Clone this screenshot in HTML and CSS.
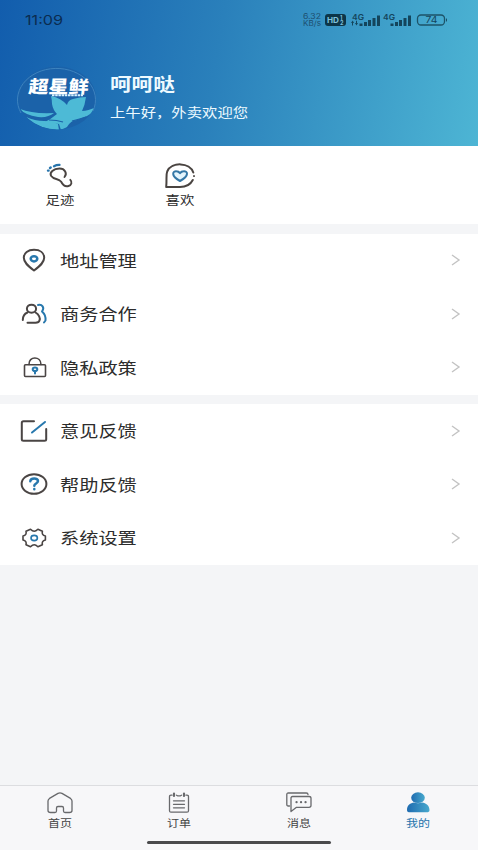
FILE: index.html
```html
<!DOCTYPE html>
<html lang="zh-CN">
<head>
<meta charset="utf-8">
<title>我的</title>
<link rel="stylesheet" href="styles.css">
</head>
<body>
<div class="app">
  <header class="hero">
    <div class="status">
      <span class="time"><span class="wide">11:09</span></span>
      <svg class="signals" width="146" height="16" viewBox="0 0 146 16">
        <g class="rate">
          <text x="0" y="7" textLength="18" lengthAdjust="spacingAndGlyphs">6.32</text>
          <text x="0" y="13.500" textLength="18" lengthAdjust="spacingAndGlyphs">KB/s</text>
        </g>
        <g transform="translate(22 0)">
          <rect x="0" y="2" width="21" height="12" rx="3" fill="#0c3549"/>
          <text class="hd" x="2" y="11.300" textLength="12" lengthAdjust="spacingAndGlyphs">HD</text>
          <text class="tiny" x="15" y="7.500">1</text>
          <text class="tiny" x="15" y="13">2</text>
          <g class="ink">
            <text class="net" x="27" y="7.500" textLength="12" lengthAdjust="spacingAndGlyphs">4G</text>
            <path d="M26 11l1.700-2.500 1.300 2.500h-1v2.500h-1V11zM30 11h1V8.800h1V11h1l-1.500 2.500zM34.500 11.500h3v2.500h-3zM39 10h3v4h-3zM43 8h3v6h-3zM47.500 6h3v8h-3zM52 3.500h3v10.500h-3z"/>
            <text class="net" x="58" y="7.500" textLength="12" lengthAdjust="spacingAndGlyphs">4G</text>
            <path d="M65.500 11.500h3v2.500h-3zM70 10h3v4h-3zM74 8h3v6h-3zM78.500 6h3v8h-3zM83 3.500h3v10.500h-3z"/>
            <rect x="92.500" y="3" width="27" height="10" rx="3.500" fill="none" stroke="#1d5368" stroke-width="1.300"/>
            <path d="M121 6q2 2 0 4z"/>
            <text class="battery" x="100.500" y="11.300" textLength="12" lengthAdjust="spacingAndGlyphs">74</text>
          </g>
        </g>
      </svg>
    </div>
    <div class="profile">
      <svg class="avatar" width="80" height="66" viewBox="0 0 80 66">
        <defs><clipPath id="oval"><ellipse cx="40" cy="33" rx="39" ry="31.500"/></clipPath></defs>
        <ellipse cx="40" cy="33" rx="39" ry="31.500" fill="#1b62a9"/>
        <g clip-path="url(#oval)" fill="#4dbad6">
          <path d="M34 31q10 2 16 9 1-5 6-6 7-2 13-2-1 8-4 14 6 0 14-4-3 6-9 9l-10 4q-6 0-10 7l-6 3-2-6-14-2q6-3 12-8-4-4-5-10 0-4-1-8z"/>
          <path d="M3 44q12 5 34 4-6 5-16 4Q8 50 3 44zM9 52q9 4 18 4 8 0 14 3l1 6q-18 0-33-13z"/>
        </g>
        <path d="M32 55q8 0 14 2M55 56q8-2 14-4" fill="none" stroke="#1b62a9" stroke-width="1.200"/>
        <path d="M4 48A39 31.500 0 1 1 76 46" fill="none" stroke="#3d83bf" stroke-width="1"/>
        <text class="brand" transform="translate(11 28) skewX(-6)" textLength="60" lengthAdjust="spacingAndGlyphs">超星鲜</text>
        <path d="M35 30.300h31" stroke="#d9f2ff" stroke-width="2" stroke-dasharray="2.500 .7"/>
      </svg>
      <div class="who">
        <div class="name"><span class="wide">呵呵哒</span></div>
        <div class="greet"><span class="wide">上午好，外卖欢迎您</span></div>
      </div>
    </div>
  </header>

  <section class="quick">
    <div class="quick-item">
      <svg width="30" height="26" viewBox="0 0 30 26" fill="none" stroke-linecap="round">
        <path d="M19.500 14C22.500 10.500 20 5.500 14.500 5.500 8.500 5.500 4 9.500 6.200 13c2.800 4 6.800 2 9.800 5.500 1.500 3 4 5.500 7.500 4.500 3-.8 4-4 1.800-6.200" stroke="#4a4441" stroke-width="1.900"/>
        <path d="M9 3.200q2.500-1.400 5.500-1.300" stroke="#2875ac" stroke-width="2.300"/>
        <path d="M5 5l.7-.5M3 7.600h.6" stroke="#2875ac" stroke-width="2.400"/>
      </svg>
      <span class="wide">足迹</span>
    </div>
    <div class="quick-item">
      <svg width="30" height="26" viewBox="0 0 30 26" fill="none" stroke-linecap="round" stroke-linejoin="round">
        <path d="M28.300 9.500C25-.8 6.500-1.500 2.200 8.500 .8 12 2 15 1.200 24H15c6.500 0 10.500-2.500 12.800-7" stroke="#4a4441" stroke-width="2"/>
        <path d="M29 13v.2" stroke="#4a4441" stroke-width="1.800"/>
        <path d="M15 18C5 12.500 8 7.800 11.500 8.200q2 0 3.500 2 1.500-2 3.500-2c4-.4 6.500 4.300-3.500 9.800z" stroke="#3477a6" stroke-width="2" fill="#e4f5fd"/>
      </svg>
      <span class="wide">喜欢</span>
    </div>
  </section>

  <section class="menu">
    <div class="row">
      <svg class="icon" viewBox="0 0 28 24"><path class="dark" d="M14 22.500C8 18 3.800 14.500 3.800 9.800 3.800 4.800 8 1.800 14 1.800s10.200 3 10.200 8c0 4.700-4.200 8.200-10.200 12.700z"/><ellipse class="blue thick" cx="14" cy="10.800" rx="3.300" ry="2.600"/></svg>
      <span class="label"><span class="wide">地址管理</span></span>
      <svg class="arrow" viewBox="0 0 10 12"><path d="M1 1l7 5-7 5"/></svg>
    </div>
    <div class="row">
      <svg class="icon" viewBox="0 0 28 24"><path class="blue" d="M18 3c4-1 7 2.500 4 6.500 3.500 3 3.800 6 3.500 9l-1.500 2"/><ellipse class="dark" cx="11.500" cy="6.700" rx="4.600" ry="4"/><path class="dark" d="M7.500 10.500C3.800 12 2.800 15 2.800 18M15.500 10.500c3.500 2 5 5.500 4 8-.5 1.900-2 2.200-4 2.200H7.500"/></svg>
      <span class="label"><span class="wide">商务合作</span></span>
      <svg class="arrow" viewBox="0 0 10 12"><path d="M1 1l7 5-7 5"/></svg>
    </div>
    <div class="row">
      <svg class="icon" viewBox="0 0 28 24"><rect class="dark slim" x="4.500" y="9.800" width="21" height="11.700" rx="1"/><path class="dark slim" d="M9 9.500C8.500 .8 21 .8 21 9.500"/><ellipse class="blue" cx="15" cy="14.300" rx="2.300" ry="1.800"/><path class="blue" d="M15 16v2.500"/></svg>
      <span class="label"><span class="wide">隐私政策</span></span>
      <svg class="arrow" viewBox="0 0 10 12"><path d="M1 1l7 5-7 5"/></svg>
    </div>
  </section>

  <section class="menu">
    <div class="row">
      <svg class="icon" viewBox="0 0 28 24"><path class="dark" d="M14 2.200H3.500Q1.800 2.200 1.800 3.700v16.600q0 1.500 1.700 1.500h21q1.700 0 1.700-1.500V10"/><path class="blue" d="M12 13.500L25 3"/></svg>
      <span class="label"><span class="wide">意见反馈</span></span>
      <svg class="arrow" viewBox="0 0 10 12"><path d="M1 1l7 5-7 5"/></svg>
    </div>
    <div class="row">
      <svg class="icon" viewBox="0 0 28 24"><ellipse class="dark" cx="14" cy="12" rx="12.400" ry="9.800"/><path class="blue thick" d="M10.300 9.300c.2-3.800 7.700-3.800 7.700-.2 0 2.500-3.700 2.200-3.700 4.700M14.300 17v.2"/></svg>
      <span class="label"><span class="wide">帮助反馈</span></span>
      <svg class="arrow" viewBox="0 0 10 12"><path d="M1 1l7 5-7 5"/></svg>
    </div>
    <div class="row">
      <svg class="icon" viewBox="0 0 28 24"><path class="dark slim" d="M10.500 3.200q2 2 3.700 2t3.700-2l4.500 2q-1 4 3 4.800v4q-4 1-3 4.800l-4.500 2q-2-2-3.700-2t-3.700 2l-4.500-2q1-3.800-3-4.800v-4Q7 9.200 6 5.200z"/><ellipse class="blue slim" cx="14.200" cy="12" rx="3.200" ry="2.600"/></svg>
      <span class="label"><span class="wide">系统设置</span></span>
      <svg class="arrow" viewBox="0 0 10 12"><path d="M1 1l7 5-7 5"/></svg>
    </div>
  </section>

  <nav class="tabs">
    <div class="tab">
      <svg viewBox="0 0 28 22"><path d="M12 1.400q2-1 4 0l8.500 5Q26 7.500 26 9v9.500q0 2-2.500 2H19q-1.500 0-1.500-1.500v-3q0-1.500-1.500-1.500h-4q-1.500 0-1.500 1.500v3q0 1.500-1.500 1.500H4.500q-2.500 0-2.500-2V9q0-1.500 1.500-2.600z"/></svg>
      <span class="wide">首页</span>
    </div>
    <div class="tab">
      <svg viewBox="0 0 28 22"><path d="M7 3.200H6q-1.500 0-1.500 1.500v14q0 1.500 1.500 1.500h16q1.500 0 1.500-1.500v-14q0-1.500-1.500-1.500h-1M11.500 3.200q2.500 1.500 5 0M8.500 8.800h11M8.500 12.300h11M8.500 15.800h11"/><path class="pin" d="M9 1.500v2.500M19 1.500v2.500"/></svg>
      <span class="wide">订单</span>
    </div>
    <div class="tab">
      <svg viewBox="0 0 28 22"><path d="M4.500 14H3.300q-1.500 0-1.500-1.500v-10Q1.800 1 3.300 1h18q1.700 0 1.700 1.500M7.500 4.500H24q2 0 2 1.800v7.200q0 1.800-2 1.800H11.500L6 19.500V6q0-1.500 1.500-1.500z"/><path class="dots" d="M11.500 10.200h.1M16 10.200h.1M20.500 10.200h.1"/></svg>
      <span class="wide">消息</span>
    </div>
    <div class="tab active">
      <svg viewBox="0 0 28 22"><defs><linearGradient id="person"><stop stop-color="#1f6bb0"/><stop offset="1" stop-color="#48a9cd"/></linearGradient></defs><g class="solid" fill="url(#person)"><ellipse cx="14" cy="5.700" rx="6.800" ry="5.400"/><path d="M3 18c0-5 3.500-7 7-7.500q4 1.500 8 0c4 .5 7.500 3 7.500 7.500 0 2-1 2.200-3 2.200H6C4 20.200 3 20 3 18z"/></g></svg>
      <span class="wide">我的</span>
    </div>
    <div class="home-bar"></div>
  </nav>
</div>
</body>
</html>
```
FILE: styles.css
```css
* {
  box-sizing: border-box;
}

body {
  margin: 0;
  font-family: "Noto Sans CJK SC", sans-serif;
  color: #2c2c2c;
}

.app {
  display: flex;
  flex-direction: column;
  gap: 9.500px;
  height: 850px;
  background: #f4f5f7;
  overflow: hidden;
}

.wide {
  display: inline-block;
  transform: scaleX(1.2);
  white-space: nowrap;
}

.hero {
  height: 146px;
  margin-bottom: -9.500px;
  background: linear-gradient(100deg, #125dad 0%, #2a80bb 45%, #4db5d4 100%);
}

.status {
  display: flex;
  align-items: center;
  height: 40px;
  padding-left: 25px;
  color: #0b2c50;
}

.time {
  width: 278px;
  font: 13.500px Inter, sans-serif;
}

.time .wide {
  transform: scaleX(1.2);
  transform-origin: left;
}

.signals {
  font-family: Inter, sans-serif;
}

.rate {
  font-size: 7.500px;
  fill: #1d4f70;
}

.hd {
  font-size: 8px;
  font-weight: 700;
  fill: #7fc0dc;
}

.tiny {
  font-size: 5.500px;
  font-weight: 700;
  fill: #7fc0dc;
}

.ink {
  fill: #14455c;
}

.net {
  font-size: 7.500px;
  font-weight: 600;
}

.battery {
  font-size: 9px;
}

.profile {
  display: flex;
  padding: 25px 0 0 17px;
}

.brand {
  font-size: 17.500px;
  font-weight: 900;
  fill: #fff;
}

.who {
  padding: 4px 0 0 13px;
  color: #eefaff;
}

.who .wide,
.label .wide {
  transform-origin: left;
}

.name {
  font-size: 18px;
  font-weight: 700;
  line-height: 28px;
}

.greet {
  font-size: 13px;
  line-height: 20px;
  margin-top: 5px;
}

.greet .wide {
  transform: scaleX(1.18);
}

.quick {
  display: flex;
  height: 78px;
  background: #fff;
}

.quick-item {
  display: flex;
  flex-direction: column;
  align-items: center;
  width: 120px;
  padding-top: 17px;
  font-size: 12px;
  line-height: 20px;
}

.quick-item .wide {
  margin-top: 1px;
}

.menu {
  height: 161px;
  background: #fff;
}

.row {
  display: flex;
  align-items: center;
  height: 53.600px;
  padding: 0 17px 0 20px;
}

.icon {
  width: 28px;
  height: 24px;
  fill: none;
  stroke-width: 2;
  stroke-linecap: round;
  stroke-linejoin: round;
}

.dark {
  stroke: #4a4544;
}

.blue {
  stroke: #2878ad;
}

.icon .thick {
  stroke-width: 2.500;
}

.icon .slim {
  stroke-width: 1.600;
}

.label {
  flex: 1;
  margin-left: 12px;
  padding-bottom: 1px;
  font-size: 16px;
  line-height: 24px;
}

.arrow {
  width: 10px;
  height: 12px;
  fill: none;
  stroke: #c3c3c3;
  stroke-width: 1.400;
}

.tabs {
  position: relative;
  display: flex;
  height: 65px;
  margin-top: auto;
  border-top: 1px solid #dcdde0;
  background: #f7f7f9;
}

.tab {
  display: flex;
  flex: 1;
  flex-direction: column;
  align-items: center;
  padding-top: 6px;
  font-size: 10px;
  line-height: 16px;
  color: #444;
}

.tab svg {
  width: 28px;
  height: 22px;
  margin-bottom: 1px;
  fill: none;
  stroke: #68696c;
  stroke-width: 1.300;
  stroke-linecap: round;
  stroke-linejoin: round;
}

.tab .dots,
.tab .pin {
  stroke-width: 2.200;
}

.tab .solid {
  stroke: none;
}

.tab.active {
  color: #2875ad;
}

.home-bar {
  position: absolute;
  left: 147px;
  bottom: 6px;
  width: 184px;
  height: 3.500px;
  border-radius: 2px;
  background: #4a4a4c;
}
```
